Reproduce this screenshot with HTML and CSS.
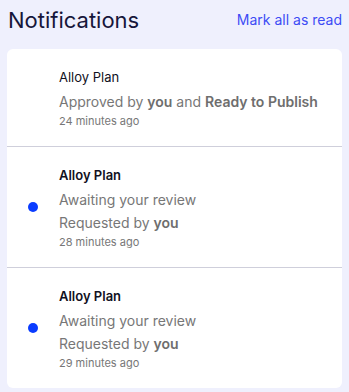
FILE: index.html
```html
<!DOCTYPE html>
<html lang="en">
<head>
  <meta charset="UTF-8" />
  <meta name="viewport" content="width=device-width, initial-scale=1.0"/>
  <title>Notifications</title>
  <link rel="stylesheet" href="styles.css">
</head>
<body>
  <div class="page">
    <header class="header">
      <h1 class="title">Notifications</h1>
      <a href="#" class="mark-read">Mark all as read</a>
    </header>

    <section class="card">
      <div class="item">
        <span class="dot-slot"></span>
        <div class="item-body">
          <div class="item-title">Alloy Plan</div>
          <div class="item-line">Approved by <b>you</b> and <b>Ready to Publish</b></div>
          <div class="item-time">24 minutes ago</div>
        </div>
      </div>
      <div class="item unread">
        <span class="dot-slot"><span class="dot"></span></span>
        <div class="item-body">
          <div class="item-title">Alloy Plan</div>
          <div class="item-line">Awaiting your review</div>
          <div class="item-line">Requested by <b>you</b></div>
          <div class="item-time">28 minutes ago</div>
        </div>
      </div>
      <div class="item unread">
        <span class="dot-slot"><span class="dot"></span></span>
        <div class="item-body">
          <div class="item-title">Alloy Plan</div>
          <div class="item-line">Awaiting your review</div>
          <div class="item-line">Requested by <b>you</b></div>
          <div class="item-time">29 minutes ago</div>
        </div>
      </div>
    </section>
  </div>
</body>
</html>
```

FILE: styles.css
```css
body {
  margin: 0;
  font-family: Inter, 'Noto Sans', sans-serif;
  background: #eff0fd;
  color: #14142b;
}
.page {
  padding: 5px 7px 7px;
}
.header {
  display: flex;
  align-items: center;
  justify-content: space-between;
  margin-bottom: 14px;
}
.title {
  margin: 0;
  padding-left: 1px;
  font-size: 22px;
  line-height: 30px;
  font-weight: 400;
  color: #16163a;
}
.mark-read {
  font-size: 14px;
  line-height: 20px;
  color: #3d4cf5;
  text-decoration: none;
}
.card {
  background: #fff;
  border-radius: 6px;
  overflow: hidden;
}
.item {
  display: flex;
  align-items: center;
  padding: 17px 10px 17px 21px;
  border-bottom: 1px solid #cfcfdb;
}
.item:last-child {
  border-bottom: none;
}
.dot-slot {
  width: 10px;
  flex: none;
  margin-right: 21px;
}
.dot {
  display: block;
  width: 10px;
  height: 10px;
  border-radius: 50%;
  background: #0a3cff;
}
.item-title {
  font-size: 13px;
  line-height: 22px;
  margin-bottom: 2px;
  color: #111122;
}
.unread .item-title {
  font-weight: 600;
}
.item-line {
  font-size: 14px;
  line-height: 23px;
  color: #777777;
}
.item-line b {
  font-weight: 600;
  color: #6e6e6e;
}
.item-time {
  font-size: 11px;
  line-height: 16px;
  color: #777777;
}
```
